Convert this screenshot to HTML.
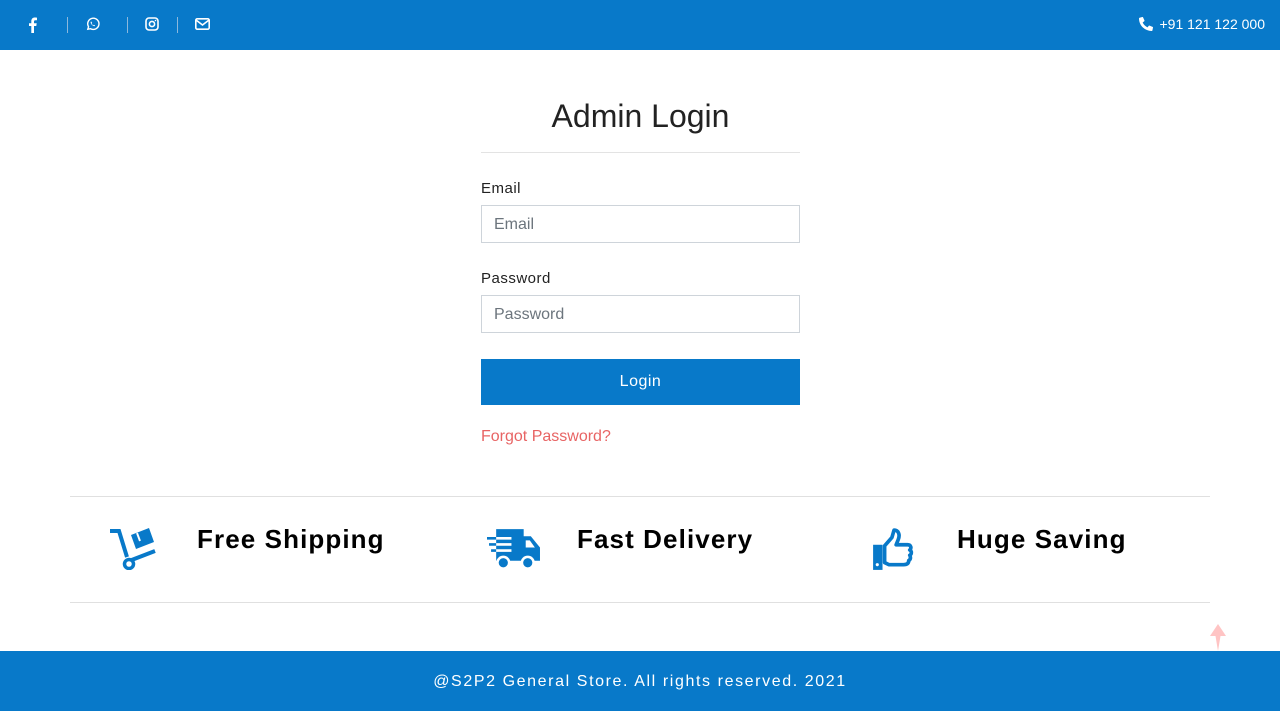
<!DOCTYPE html>
<html><head><meta charset="utf-8"><style>
*{box-sizing:border-box;margin:0;padding:0}
body{width:1280px;height:711px;background:#fff;font-family:"Liberation Sans",sans-serif;position:relative;overflow:hidden}
.top{height:50px;background:#0879c9;position:relative;color:#fff}
.top > svg{position:absolute}
.sep{position:absolute;top:17px;width:1px;height:16px;background:#8bb8dd}
.phone{position:absolute;right:15px;top:16px;font-size:14px;display:flex;align-items:center;gap:7px}
h1{position:absolute;top:98px;left:481px;width:319px;text-align:center;font-weight:normal;font-size:32px;color:#222}
.hr1{position:absolute;top:152px;left:481px;width:319px;height:1px;background:#e3e3e3}
label{position:absolute;left:481px;font-size:15px;color:#222;letter-spacing:.5px}
.inp{position:absolute;left:481px;width:319px;height:38px;border:1px solid #ced4da;padding:0 12px;line-height:38px;font-size:16px;color:#6c757d}
.btn{position:absolute;left:481px;top:359px;width:319px;height:46px;background:#0879c9;color:#fff;text-align:center;line-height:46px;font-size:16px;letter-spacing:.5px}
.fp{position:absolute;left:481px;top:428px;font-size:16px;color:#e86464}
.hr{position:absolute;left:70px;width:1140px;height:1px;background:#e0e0e0}
.feat{position:absolute;top:524px;font-size:26px;font-weight:bold;letter-spacing:1.1px;color:#000}
.ico{position:absolute}
.foot{position:absolute;bottom:0;left:0;width:1280px;height:60px;background:#0879c9;color:#fff;text-align:center;line-height:62px;font-size:16px;letter-spacing:1.6px}
</style></head><body>
<div class="top">
<svg style="left:28px;top:17px" width="9" height="16" viewBox="0 0 9 16"><path d="M6 16V9h2.3l.4-2.8H6V4.5c0-.8.3-1.3 1.4-1.3H9V.7C8.6.6 7.8.5 6.9.5 4.8.5 3.3 1.8 3.3 4.1v2.1H1V9h2.3v7z" fill="#fff"/></svg>
<div class="sep" style="left:67px"></div>
<svg style="left:85px;top:17px" width="15" height="15" viewBox="0 0 16 16"><path d="M3 13l.8-2.6A6 6 0 1 1 6 12.5z" fill="none" stroke="#fff" stroke-width="1.5"/><path d="M6 5.5c0 2 2 4 4 4.3l.8-.8-1.3-.7-.6.5c-.8-.4-1.4-1-1.8-1.8l.5-.6L7 5 6.3 4.8z" fill="#fff"/></svg>
<div class="sep" style="left:127px"></div>
<svg style="left:145px;top:17px" width="14" height="14" viewBox="0 0 14 14"><rect x="1" y="1" width="12" height="12" rx="3" fill="none" stroke="#fff" stroke-width="1.6"/><circle cx="7" cy="7" r="2.6" fill="none" stroke="#fff" stroke-width="1.6"/><circle cx="10.5" cy="3.5" r=".8" fill="#fff"/></svg>
<div class="sep" style="left:177px"></div>
<svg style="left:195px;top:18px" width="15" height="12" viewBox="0 0 15 12"><rect x=".8" y=".8" width="13.4" height="10.4" rx="1.5" fill="none" stroke="#fff" stroke-width="1.6"/><path d="M1 2l6.5 5L14 2" fill="none" stroke="#fff" stroke-width="1.6"/></svg>
<div class="phone"><svg width="14" height="14" viewBox="0 0 16 16"><path d="M15.5 11.3l-3.4-1.5a.8.8 0 0 0-.9.2l-1.5 1.8A11.6 11.6 0 0 1 4.2 6.3L6 4.8a.8.8 0 0 0 .2-.9L4.7.5A.8.8 0 0 0 3.8 0L.6.8A.8.8 0 0 0 0 1.5C0 9.5 6.5 16 14.5 16a.8.8 0 0 0 .8-.6l.7-3.2a.8.8 0 0 0-.5-.9z" fill="#fff"/></svg><span>+91 121 122 000</span></div>
</div>
<h1>Admin Login</h1>
<div class="hr1"></div>
<label style="top:180px">Email</label>
<div class="inp" style="top:205px">Email</div>
<label style="top:270px">Password</label>
<div class="inp" style="top:295px">Password</div>
<div class="btn">Login</div>
<div class="fp">Forgot Password?</div>
<div class="hr" style="top:496px"></div>
<div class="hr" style="top:602px"></div>
<svg class="ico" style="left:109px;top:528px" width="48" height="42" viewBox="0 0 48 42"><path d="M1 3h9l8 26" fill="none" stroke="#0879c9" stroke-width="4"/><path d="M20 33l26-10" stroke="#0879c9" stroke-width="4"/><circle cx="20" cy="36" r="4.5" fill="#fff" stroke="#0879c9" stroke-width="3.5"/><path d="M22 7l18-7 5 14-18 7z" fill="#0879c9"/><path d="M28 5l3 8" stroke="#fff" stroke-width="2"/></svg>
<div class="feat" style="left:197px">Free Shipping</div>
<svg class="ico" style="left:487px;top:528px" width="54" height="43" viewBox="0 0 53 42"><path d="M9 1h27v7h7l9 11v13H9z" fill="#0879c9"/><path d="M0 10h24M2 16h22M4 22h20" stroke="#fff" stroke-width="2.6"/><path d="M0 10h9M2 16h7M4 22h5" stroke="#0879c9" stroke-width="2.6"/><path d="M38 12h4l5 7h-9z" fill="#fff"/><circle cx="16" cy="34" r="7" fill="#fff"/><circle cx="16" cy="34" r="4.5" fill="#0879c9"/><circle cx="40" cy="34" r="7" fill="#fff"/><circle cx="40" cy="34" r="4.5" fill="#0879c9"/></svg>
<div class="feat" style="left:577px">Fast Delivery</div>
<svg class="ico" style="left:872px;top:528px" width="42" height="44" viewBox="0 0 40 42"><path d="M1 16h9v24H1z" fill="#0879c9"/><path d="M12 17l7-8 2-7c4 0 6 4 4 9l-2 5h11c3 0 4 3 2 5 2 1 2 4 0 5 1 2 1 4-1 5 0 3-2 4-5 4H16l-4-2z" fill="none" stroke="#0879c9" stroke-width="3.5" stroke-linejoin="round"/><circle cx="5" cy="35" r="1.5" fill="#fff"/></svg>
<div class="feat" style="left:957px">Huge Saving</div>
<svg class="ico" style="left:1209px;top:624px" width="18" height="27" viewBox="0 0 18 27"><path d="M9 0l8 12h-5.5l-2.5 15-2.5-15H1z" fill="#ffc4c4"/></svg>
<div class="foot">@S2P2 General Store. All rights reserved. 2021</div>
</body></html>
